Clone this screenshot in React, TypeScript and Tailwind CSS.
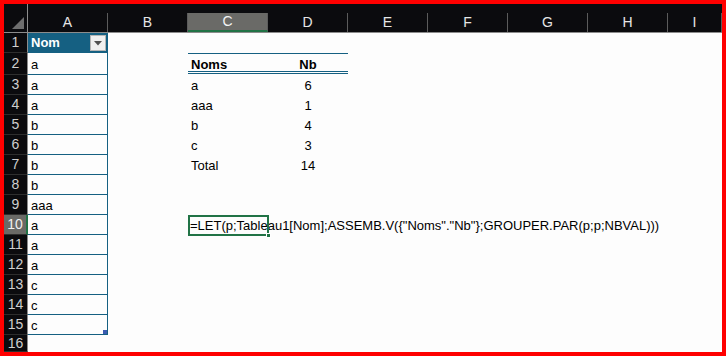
const colNames = ["A", "B", "C", "D", "E", "F", "G", "H", "I"];

const colA = ["Nom", "a", "a", "a", "b", "b", "b", "b", "aaa", "a", "a", "a", "c", "c", "c"];

const pivot: Record<number, [string, string]> = {
  3: ["a", "6"],
  4: ["aaa", "1"],
  5: ["b", "4"],
  6: ["c", "3"],
  7: ["Total", "14"],
};

const formula = '=LET(p;Tableau1[Nom];ASSEMB.V({"Noms"."Nb"};GROUPER.PAR(p;p;NBVAL)))';

const rowHeights = [20, 22, 20, 20, 20, 20, 20, 20, 20, 20, 20, 20, 20, 20, 20, 17];

const font = { fontFamily: '"Liberation Sans", Arial, sans-serif' };

function ColHeader() {
  return (
    <div className="flex h-[29px] bg-[#0b0b0e] border-b border-[#8c8c8c]">
      {/* corner */}
      <div className="w-[24px] shrink-0 border-r border-[#8c8c8c] flex items-end justify-end pr-[3px] pb-[3px]">
        <svg width="12" height="12" viewBox="0 0 12 12">
          <polygon points="12,0 12,12 0,12" fill="#6e6e6e" />
        </svg>
      </div>
      {colNames.map((c, i) => (
        <div
          key={c}
          className={
            "shrink-0 flex items-end " + (i === 8 ? "w-[54px]" : "w-[80px]")
          }
        >
          <div
            className={
              "h-[19px] w-full flex items-center justify-center text-[14px] border-r border-[#5c5c5c] " +
              (c === "C"
                ? "bg-[#6a6a67] text-[#f4f4f4] border-b-2 border-b-[#217346]"
                : "text-[#e6e6e6]")
            }
          >
            {c}
          </div>
        </div>
      ))}
    </div>
  );
}

function Row({ n, h }: { n: number; h: number }) {
  const a = colA[n - 1];
  const p = pivot[n];
  const inTable = n <= 15;
  return (
    <div className="flex" style={{ height: h }}>
      <div
        className={
          "w-[24px] shrink-0 flex items-center justify-center text-[14px] border-b border-[#2e2e2e] " +
          (n === 10
            ? "bg-[#6a6a67] text-[#f0f0f0] border-r-2 border-r-[#217346]"
            : "bg-[#0b0b0e] text-[#cfcfcf] border-r border-r-[#8c8c8c]")
        }
      >
        {n}
      </div>
      {/* A */}
      <div
        className={
          "w-[80px] shrink-0 relative flex items-center pl-[3px] " +
          (inTable ? "border-b border-r border-[#156082] " : "") +
          (n === 1 ? "bg-[#156082] text-white font-bold" : "text-black pt-[2px]")
        }
      >
        {a}
        {n === 1 && (
          <div className="absolute right-[1px] top-[2px] w-[16px] h-[16px] bg-[#f0f0f0] border border-[#b5b5b5] flex items-center justify-center">
            <svg width="8" height="5" viewBox="0 0 8 5">
              <polygon points="0,0 8,0 4,4.5" fill="#505050" />
            </svg>
          </div>
        )}
        {n === 15 && (
          <div className="absolute right-[0px] bottom-[0px] w-[4px] h-[4px] bg-[#3b5bb0]" />
        )}
      </div>
      {/* B */}
      <div className="w-[80px] shrink-0" />
      {/* C + D pivot / formula */}
      {n === 2 ? (
        <div className="w-[160px] shrink-0 flex border-t border-[#156082] relative font-bold text-black">
          <div className="w-[80px] flex items-center pl-[3px]">Noms</div>
          <div className="w-[80px] flex items-center justify-center">Nb</div>
          <div className="absolute left-0 right-0 bottom-[1px] h-[3px] border-y border-[#156082]" />
        </div>
      ) : p ? (
        <div className="w-[160px] shrink-0 flex text-black pt-[2px]">
          <div className="w-[80px] flex items-center pl-[3px]">{p[0]}</div>
          <div className="w-[80px] flex items-center justify-center">{p[1]}</div>
        </div>
      ) : n === 10 ? (
        <div className="w-[160px] shrink-0 relative">
          <div className="absolute left-[2px] top-0 h-full flex items-center pt-[2px] whitespace-nowrap text-black">
            {formula}
          </div>
          <div className="absolute left-0 top-0 w-[81px] h-[21px] border-2 border-[#217346]" />
          <div className="absolute left-[78px] top-[18px] w-[5px] h-[5px] bg-[#217346] border border-white" />
        </div>
      ) : (
        <div className="w-[160px] shrink-0" />
      )}
      <div className="flex-1" />
    </div>
  );
}

export default function App() {
  return (
    <div className="w-[726px] h-[356px] bg-[#ff0000] p-[4px]" style={font}>
      <div className="w-full h-full bg-[#fdfdfd] overflow-hidden flex flex-col text-[13px]">
        <ColHeader />
        {rowHeights.map((h, i) => (
          <Row key={i} n={i + 1} h={h} />
        ))}
      </div>
    </div>
  );
}
